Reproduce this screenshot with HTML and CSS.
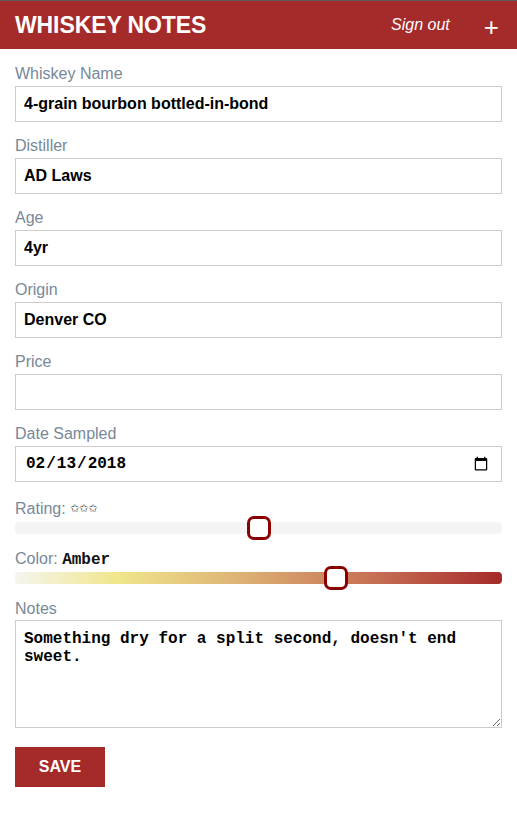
FILE: index.html
```html
<!DOCTYPE html>
<html>
<head>
<meta charset="utf-8">
<link rel="stylesheet" href="styles.css">
</head>
<body>
<header class="topbar">
  <h1 class="brand">WHISKEY NOTES</h1>
  <nav class="actions">
    <a class="signout" href="#">Sign out</a>
    <a class="add" href="#">+</a>
  </nav>
</header>
<form class="form">
  <div class="field">
    <label class="label">Whiskey Name</label>
    <input class="input" type="text" value="4-grain bourbon bottled-in-bond">
  </div>
  <div class="field">
    <label class="label">Distiller</label>
    <input class="input" type="text" value="AD Laws">
  </div>
  <div class="field">
    <label class="label">Age</label>
    <input class="input" type="text" value="4yr">
  </div>
  <div class="field">
    <label class="label">Origin</label>
    <input class="input" type="text" value="Denver CO">
  </div>
  <div class="field">
    <label class="label">Price</label>
    <input class="input" type="text" value="">
  </div>
  <div class="field">
    <label class="label">Date Sampled</label>
    <input class="input date" type="date" value="2018-02-13">
  </div>
  <div class="field range-field rating-field">
    <label class="label">Rating: <span class="stars">✩✩✩</span></label>
    <input class="range rating" type="range" min="0" max="6" value="3">
  </div>
  <div class="field range-field color-field">
    <label class="label">Color: <span class="mono">Amber</span></label>
    <input class="range color" type="range" min="0" max="3" value="2">
  </div>
  <div class="field notes-field">
    <label class="label">Notes</label>
    <textarea class="notes">Something dry for a split second, doesn't end sweet.</textarea>
  </div>
  <button class="save" type="button">SAVE</button>
</form>
</body>
</html>
```
FILE: styles.css
```css
* { box-sizing: border-box; }
html, body { margin: 0; padding: 0; background: #fff; }
body {
  font-family: "Liberation Sans", Arial, sans-serif;
  font-size: 16px;
  border-top: 1px solid #5a5a5a;
}
.topbar {
  background: #a52a2a;
  height: 48px;
  display: flex;
  align-items: center;
  justify-content: space-between;
  padding: 0 15px;
}
.brand {
  margin: 0;
  color: #fff;
  font-size: 23px;
  font-weight: bold;
  letter-spacing: -0.1px;
  line-height: 1;
}
.actions {
  display: flex;
  align-items: center;
}
.signout {
  color: #fff;
  font-style: italic;
  text-decoration: none;
  font-size: 16px;
}
.add {
  color: #fff;
  text-decoration: none;
  font-size: 26px;
  font-weight: 300;
  margin-left: 34px;
  margin-right: 3px;
  line-height: 1;
  padding-top: 4px;
}
.form {
  display: flex;
  flex-direction: column;
  padding: 15px 15px 0 15px;
}
.field {
  display: flex;
  flex-direction: column;
  margin-bottom: 14px;
}
.label {
  color: #778899;
  line-height: 18px;
  height: 18px;
  margin-top: 1px;
  margin-bottom: 3px;
}
.stars {
  font-family: "DejaVu Sans", sans-serif;
  font-size: 11px;
  color: #333;
  vertical-align: 2px;
}
.mono {
  font-family: "Liberation Mono", "Courier New", monospace;
  font-weight: bold;
  color: #111;
}
.input {
  height: 36px;
  border: 1px solid #ccc;
  border-radius: 0;
  padding: 0 8px;
  font-family: "Liberation Sans", Arial, sans-serif;
  font-size: 16px;
  font-weight: bold;
  color: #000;
  background: #fff;
  width: 100%;
  margin: 0;
  outline: none;
}
.date {
  font-family: "Liberation Mono", "Courier New", monospace;
  padding-left: 9px;
  padding-right: 10px;
}
.range-field { margin-bottom: 10px; }
.rating-field .label { margin-top: 4px; margin-bottom: -2px; }
.color-field .label { margin-top: 0; margin-bottom: -2px; }
.range {
  -webkit-appearance: none;
  appearance: none;
  width: 100%;
  height: 24px;
  margin: 0;
  padding: 0;
  background: transparent;
}
.range::-webkit-slider-runnable-track {
  height: 12px;
  border-radius: 4px;
  background: #f4f4f4;
}
.color::-webkit-slider-runnable-track {
  background: linear-gradient(to right, #f5f5f0 0%, #f0e68c 21%, #dcae72 48%, #c56c52 75%, #a52a2a 100%);
}
.range::-webkit-slider-thumb {
  -webkit-appearance: none;
  appearance: none;
  width: 24px;
  height: 24px;
  margin-top: -6px;
  border: 3px solid #8b0000;
  border-radius: 7px;
  background: #fff;
}
.notes-field { margin-bottom: 19px; }
.notes-field .label { margin-top: 0; margin-bottom: 2px; }
.notes {
  height: 108px;
  border: 1px solid #ccc;
  padding: 9px 8px 7px 8px;
  font-family: "Liberation Mono", "Courier New", monospace;
  font-weight: bold;
  font-size: 16px;
  line-height: 18px;
  color: #000;
  width: 100%;
  margin: 0;
  resize: vertical;
  outline: none;
}
.save {
  align-self: flex-start;
  width: 90px;
  height: 40px;
  background: #a52a2a;
  border: none;
  color: #fff;
  font-family: "Liberation Sans", Arial, sans-serif;
  font-weight: bold;
  font-size: 16px;
  padding: 0;
}
```
